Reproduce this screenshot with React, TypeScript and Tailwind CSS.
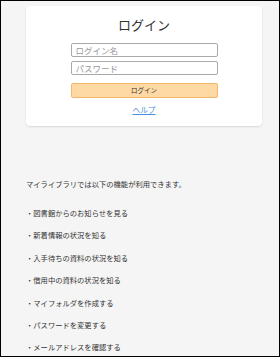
const features = [
  '・図書館からのお知らせを見る',
  '・新着情報の状況を知る',
  '・入手待ちの資料の状況を知る',
  '・借用中の資料の状況を知る',
  '・マイフォルダを作成する',
  '・パスワードを変更する',
  '・メールアドレスを確認する',
];

export default function App() {
  return (
    <div
      className="w-[280px] h-[357px] overflow-hidden border border-black bg-[#f5f5f5] text-[#333]"
      style={{ fontFamily: '"Noto Sans CJK JP", "Noto Sans", sans-serif' }}
    >
      <div className="ml-[25px] mt-[5px] w-[236px] h-[120px] bg-white rounded-[4px] shadow-[0_1px_2px_rgba(0,0,0,0.12)] flex flex-col items-center">
        <h1 className="pt-[11px] text-[13px] leading-[16px] font-normal text-[#333]">ログイン</h1>
        <input
          className="mt-[10px] w-[147px] h-[14px] px-[4px] border border-[#a9a9a9] rounded-[2px] text-[8.5px] leading-[12px] placeholder:text-[#9a9a9a] outline-none"
          placeholder="ログイン名"
        />
        <input
          type="password"
          className="mt-[4px] w-[147px] h-[14px] px-[4px] border border-[#a9a9a9] rounded-[2px] text-[8.5px] leading-[12px] placeholder:text-[#9a9a9a] outline-none"
          placeholder="パスワード"
        />
        <button className="mt-[8px] w-[147px] h-[15px] bg-[#ffd9a3] border border-[#f5b86a] rounded-[2px] text-[6.5px] leading-[13px] text-[#333]">
          ログイン
        </button>
        <a href="#" className="mt-[7px] text-[7.7px] leading-[10px] text-[#4a8fdc] underline">
          ヘルプ
        </a>
      </div>

      <div className="pl-[25px] mt-[47px] text-[7.3px] leading-[22.4px]">
        <p>マイライブラリでは以下の機能が利用できます。</p>
        <ul className="mt-[6.6px]">
          {features.map((f) => (
            <li key={f}>{f}</li>
          ))}
        </ul>
      </div>
    </div>
  );
}
